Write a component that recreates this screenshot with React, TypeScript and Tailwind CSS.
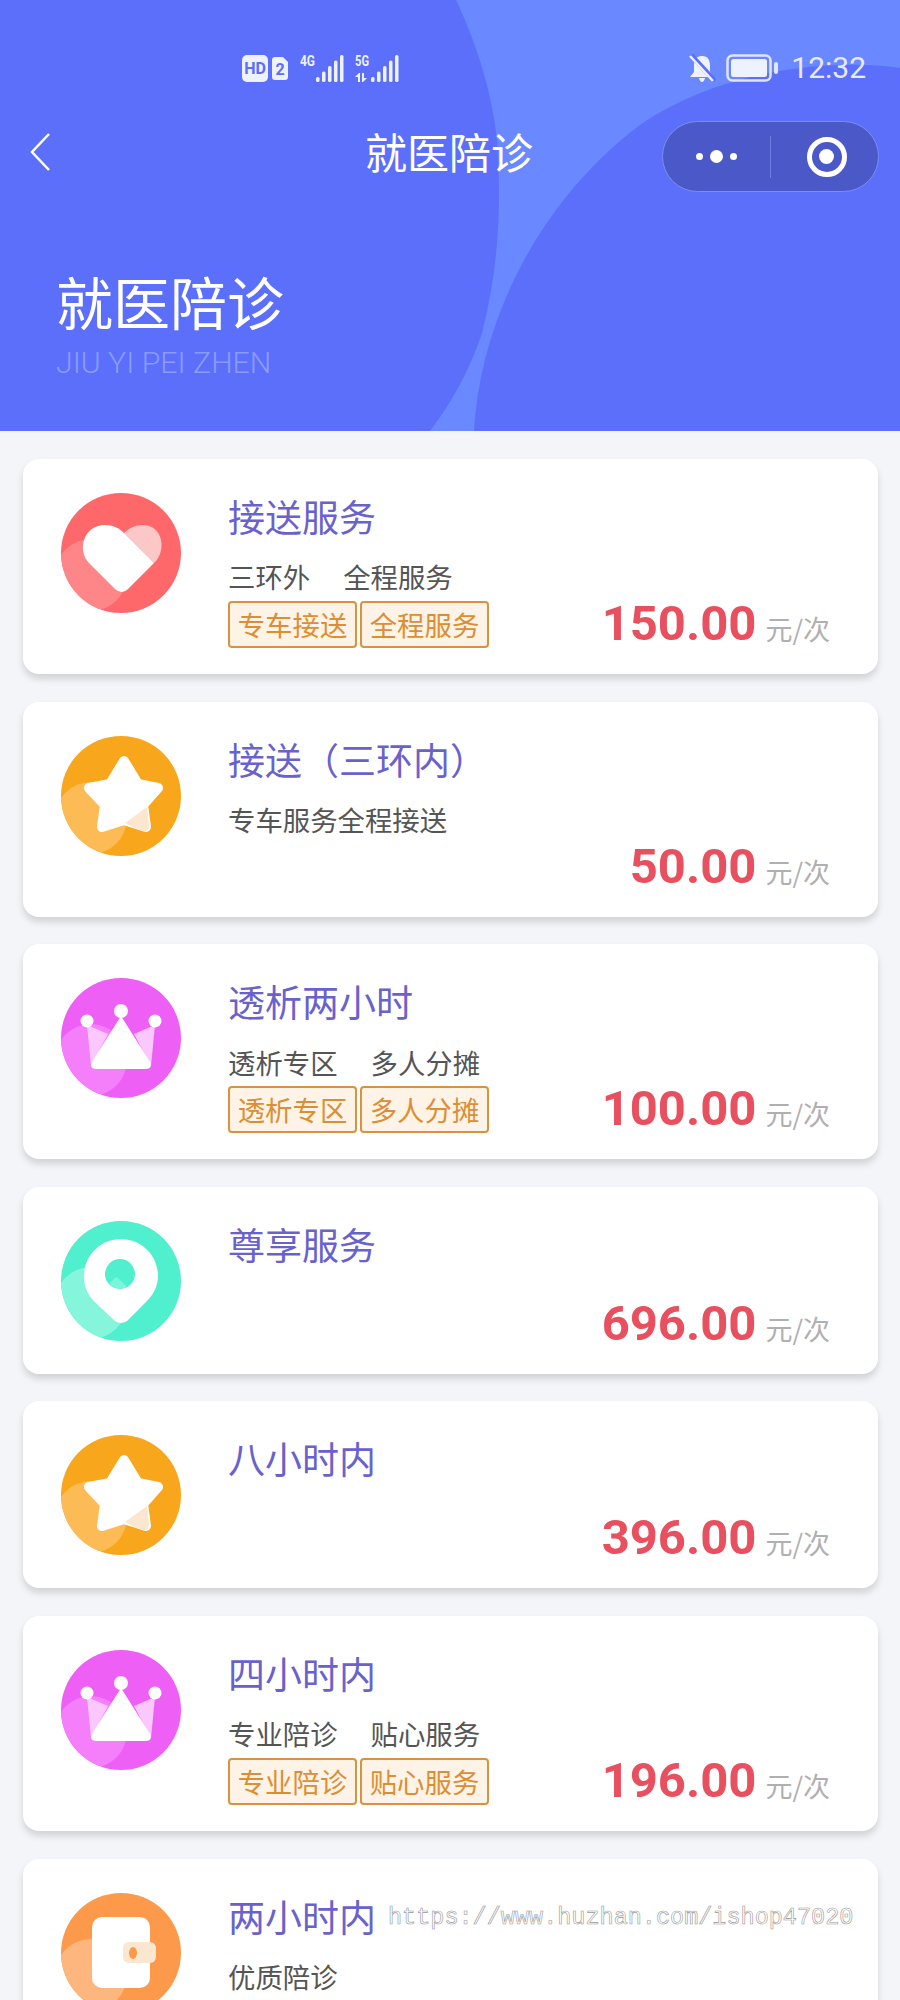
import { useId } from 'react';

const cjk = "font-['Noto_Sans_CJK_SC','Noto_Sans',sans-serif]";

type BadgeKind = 'heart' | 'star' | 'crown' | 'pin' | 'wallet';

const badgeColors: Record<BadgeKind, { base: string; light: string }> = {
  heart: { base: '#fe686a', light: '#ff8688' },
  star: { base: '#f8a61c', light: '#fdbb55' },
  crown: { base: '#ee5ff6', light: '#f57efb' },
  pin: { base: '#50efcd', light: '#85f6dc' },
  wallet: { base: '#fd994a', light: '#fdb67e' },
};

function Badge({ kind }: { kind: BadgeKind }) {
  const clipId = useId();
  const { base, light } = badgeColors[kind];
  return (
    <svg viewBox="0 0 120 120" className="w-[120px] h-[120px] shrink-0">
      <defs>
        <clipPath id={clipId}>
          <circle cx="60" cy="60" r="60" />
        </clipPath>
      </defs>
      <circle cx="60" cy="60" r="60" fill={base} />
      <circle cx="30" cy="82" r="36" fill={light} clipPath={`url(#${clipId})`} />
      {kind === 'heart' && (
        <g>
          <path d="M63 40C68 35 74 32 82 32C102 32 106 58 93 70Z" fill="#fcc7c7" />
          <path d="M44 32C52 32 58 35 63 40L93 70L67 96Q64 99 61 99Q57 99 54 96L28 70C16 58 22 32 44 32Z" fill="#fff" />
        </g>
      )}
      {kind === 'star' && (
        <g>
          <polygon points="63,25 77,48 97,52 82,69 85,91 63,84 41,91 44,69 28,52 49,48" fill="#fff" stroke="#fff" strokeWidth="10" strokeLinejoin="round" />
          <path d="M64 87L86 71L88 90Q88 96 82 95Q72 92 64 87Z" fill="#fbe7cf" />
        </g>
      )}
      {kind === 'crown' && (
        <g>
          <path d="M26 47L47 56L30 88Z" fill="#fbc8fd" />
          <path d="M94 47L73 56L90 88Z" fill="#fbc8fd" />
          <circle cx="60" cy="33" r="7" fill="#fff" />
          <circle cx="26" cy="43" r="6.5" fill="#fff" />
          <circle cx="94" cy="43" r="6.5" fill="#fff" />
          <path d="M60 38L89 84Q92 91 85 91H35Q28 91 31 84Z" fill="#fff" />
        </g>
      )}
      {kind === 'pin' && (
        <g>
          <path d="M60 18C80 18 97 34 97 55C97 70 88 78 80 86L66 100Q60 104 54 100L37 84C28 76 23 68 23 55C23 34 40 18 60 18Z" fill="#fff" />
          <circle cx="59" cy="53" r="15" fill={base} />
          <path d="M48.5 63.5Q52 57 56 56L66 66A15 15 0 0 1 48.5 63.5Z" fill={light} opacity="0.8" />
        </g>
      )}
      {kind === 'wallet' && (
        <g>
          <rect x="31" y="24" width="58" height="71" rx="10" fill="#fff" />
          <rect x="62" y="49" width="33" height="21" rx="6" fill="#fbe7cf" />
          <ellipse cx="72" cy="60" rx="4" ry="6" fill={base} />
        </g>
      )}
    </svg>
  );
}

interface Service {
  name: string;
  kind: BadgeKind;
  price?: string;
  desc?: string[];
  tags?: string[];
}

const services: Service[] = [
  { name: '接送服务', kind: 'heart', price: '150.00', desc: ['三环外', '全程服务'], tags: ['专车接送', '全程服务'] },
  { name: '接送（三环内）', kind: 'star', price: '50.00', desc: ['专车服务全程接送'] },
  { name: '透析两小时', kind: 'crown', price: '100.00', desc: ['透析专区', '多人分摊'], tags: ['透析专区', '多人分摊'] },
  { name: '尊享服务', kind: 'pin', price: '696.00' },
  { name: '八小时内', kind: 'star', price: '396.00' },
  { name: '四小时内', kind: 'crown', price: '196.00', desc: ['专业陪诊', '贴心服务'], tags: ['专业陪诊', '贴心服务'] },
  { name: '两小时内', kind: 'wallet', desc: ['优质陪诊'] },
];

function ServiceCard({ service }: { service: Service }) {
  const { name, kind, price, desc, tags } = service;
  return (
    <div className="flex bg-white rounded-[16px] pl-[38px] pr-[48px] pt-[34px] pb-[26px] shadow-[0_5px_7px_rgba(0,0,0,0.14)]">
      <Badge kind={kind} />
      <div className="flex-1 ml-[47px] -mt-[2px]">
        <div className="text-[37px] leading-[50px] text-[#6a62cc]">{name}</div>
        {desc && (
          <div className="flex gap-[33px] mt-[12px] h-[48px] items-center text-[27.4px] text-[#555]">
            {desc.map((d) => (
              <span key={d}>{d}</span>
            ))}
          </div>
        )}
        <div className={`flex justify-between items-center h-[47px] ${desc ? '' : 'mt-[32px]'}`}>
          <div className="flex gap-[3px]">
            {tags?.map((t) => (
              <span
                key={t}
                className="h-[47px] w-[129px] flex items-center justify-center rounded-[4px] border-2 border-[#d9933f] bg-[#fdf3e7] text-[27.4px] text-[#dd8e33]"
              >
                {t}
              </span>
            ))}
          </div>
          {price && (
            <div className="flex items-baseline gap-[9px] -mt-[2px]">
              <span className="font-['Roboto',sans-serif] font-bold text-[49px] leading-none text-[#e8505f]">{price}</span>
              <span className="text-[27px] leading-none text-[#b0b0b0]">元/次</span>
            </div>
          )}
        </div>
      </div>
    </div>
  );
}

function StatusIcons() {
  const bars = [0, 6, 12, 18, 24];
  return (
    <svg viewBox="0 0 157 30" className="w-[157px] h-[30px]" fill="#eef1ff">
      <rect x="0" y="2" width="26" height="27" rx="5" />
      <text x="13" y="21" textAnchor="middle" fontSize="16" fontWeight="700" fill="#5c6ffb" fontFamily="Roboto, sans-serif">HD</text>
      <path d="M30 7Q30 4 33 4H41L46 9V24Q46 27 43 27H33Q30 27 30 24Z" />
      <text x="38" y="22" textAnchor="middle" fontSize="16" fontWeight="700" fill="#5c6ffb" fontFamily="Roboto, sans-serif">2</text>
      <text x="58" y="13" fontSize="15" fontWeight="700" textLength="15" lengthAdjust="spacingAndGlyphs" fontFamily="Roboto, sans-serif">4G</text>
      {bars.map((dx, i) => (
        <rect key={`a${i}`} x={74 + dx} y={24 - i * 5.5} width="3.5" height={5 + i * 5.5} rx="1.5" />
      ))}
      <text x="113" y="13" fontSize="15" fontWeight="700" textLength="14" lengthAdjust="spacingAndGlyphs" fontFamily="Roboto, sans-serif">5G</text>
      <path d="M117 20L113 24H116V29H118V20ZM121 29L125 25H122V20H120V29Z" />
      {bars.map((dx, i) => (
        <rect key={`b${i}`} x={129 + dx} y={24 - i * 5.5} width="3.5" height={5 + i * 5.5} rx="1.5" />
      ))}
    </svg>
  );
}

export default function App() {
  return (
    <div className={`relative w-[900px] h-[2000px] overflow-hidden bg-[#f3f5f8] ${cjk}`}>
      <header className="relative h-[431px] bg-[#5c6ffb] text-white overflow-hidden">
        <svg viewBox="0 0 900 431" className="absolute inset-0 w-[900px] h-[431px]">
          <path
            d="M456 0C475 40 492 90 497 140C502 210 498 270 482 333C470 370 450 405 430 431H474C480 320 540 200 640 125C720 70 830 58 900 68V0Z"
            fill="#6a88ff"
          />
        </svg>

        <div className="relative flex items-center pt-[51px] pl-[242px] pr-[34px] h-[85px]">
          <StatusIcons />
          <svg viewBox="0 0 28 28" className="w-[28px] h-[28px] ml-auto" fill="#eef1ff">
            <path d="M14 2C8 2 6 6 6 12V18L2 23H26L22 18V12C22 6 20 2 14 2ZM11 24H17Q16 28 14 28Q12 28 11 24Z" />
            <path d="M3 1L27 27" stroke="#5c6ffb" strokeWidth="5" />
            <path d="M2 2L25 27" stroke="#eef1ff" strokeWidth="2.5" />
          </svg>
          <svg viewBox="0 0 54 28" className="w-[54px] h-[28px] ml-[10px]">
            <rect x="1.5" y="1.5" width="43" height="25" rx="5" fill="none" stroke="#dfe4ff" strokeWidth="2.5" />
            <rect x="5" y="5" width="36" height="18" rx="2.5" fill="#eef1ff" />
            <rect x="48" y="8" width="4" height="12" rx="2" fill="#dfe4ff" />
          </svg>
          <span className="ml-[11px] font-['Roboto',sans-serif] text-[30px] leading-none text-[#e6eaff]">12:32</span>
        </div>

        <div className="relative flex items-center h-[71px] mt-[36px] pl-[30px] pr-[21px]">
          <svg viewBox="0 0 20 38" className="w-[20px] h-[38px] -mt-[9px]" fill="none" stroke="#fff" strokeWidth="2.5">
            <path d="M19 1L2 19L19 37" />
          </svg>
          <h1 className="absolute left-[365px] -mt-[12px] text-[42px] leading-none font-normal">就医陪诊</h1>
          <div className="ml-auto flex items-center w-[217px] h-[71px] rounded-full bg-[#4a58c8] border border-[#7d8df0]">
            <div className="flex items-center justify-center gap-[7px] w-[108px] h-[42px] border-r border-[#6f7de0]">
              <span className="w-[7px] h-[7px] rounded-full bg-white" />
              <span className="w-[13px] h-[13px] rounded-full bg-white" />
              <span className="w-[7px] h-[7px] rounded-full bg-white" />
            </div>
            <div className="flex flex-1 items-center justify-center pl-[4px]">
              <span className="flex items-center justify-center w-[40px] h-[40px] rounded-full border-[5px] border-white">
                <span className="w-[15px] h-[15px] rounded-full bg-white" />
              </span>
            </div>
          </div>
        </div>

        <div className="relative mt-[73px] pl-[56px]">
          <div className="text-[57px] leading-[70px]">就医陪诊</div>
          <div className="font-['Roboto',sans-serif] font-light text-[30.3px] leading-[34px] mt-[11px] text-[#8a9bfd]">JIU YI PEI ZHEN</div>
        </div>
      </header>

      <main className="flex flex-col gap-[27.6px] pl-[23px] pr-[22px] pt-[28px]">
        {services.map((s) => (
          <ServiceCard key={s.name} service={s} />
        ))}
      </main>

      <div className="absolute left-[388px] top-[1905px] font-['Liberation_Mono',monospace] text-[23.5px] leading-[26px] text-white [-webkit-text-stroke:0.6px_#999]">
        https://www.huzhan.com/ishop47020
      </div>
    </div>
  );
}
